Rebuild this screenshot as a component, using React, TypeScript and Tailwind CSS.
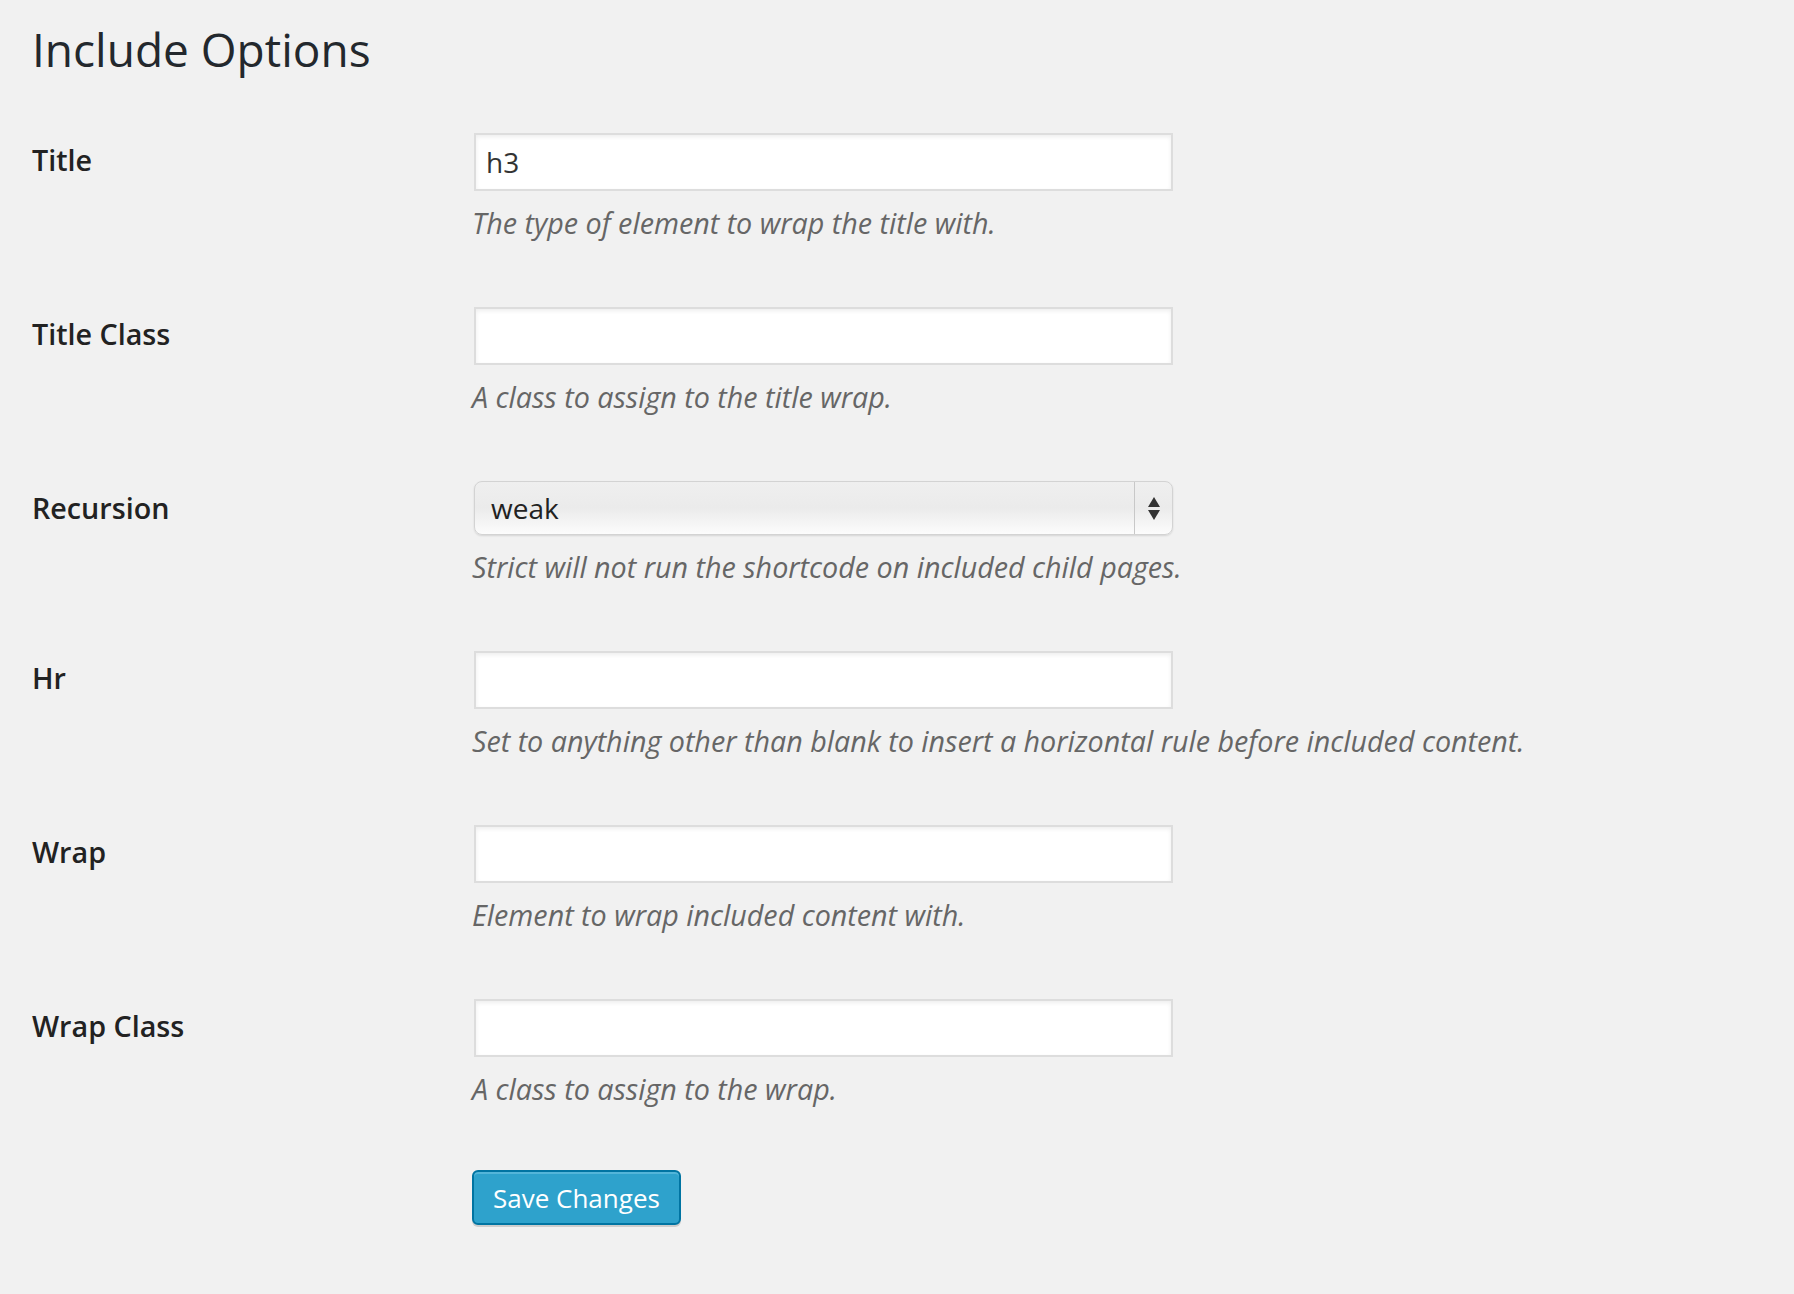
const FIELDS = [
  { label: "Title", value: "h3", help: "The type of element to wrap the title with." },
  { label: "Title Class", value: "", help: "A class to assign to the title wrap." },
  { label: "Recursion", value: "weak", help: "Strict will not run the shortcode on included child pages.", select: true },
  { label: "Hr", value: "", help: "Set to anything other than blank to insert a horizontal rule before included content." },
  { label: "Wrap", value: "", help: "Element to wrap included content with." },
  { label: "Wrap Class", value: "", help: "A class to assign to the wrap." },
];

function SelectBox({ value }: { value: string }) {
  return (
    <div className="ml-[2px] w-[699px] h-[54px] flex rounded-[8px] border border-[#d3d3d3] bg-gradient-to-b from-[#efefef] via-[#ebebeb] to-[#fcfcfc] shadow-[0_1px_2px_rgba(0,0,0,0.12)]">
      <div className="flex-1 flex items-center pl-[16px] text-[28px] text-[#222]">{value}</div>
      <div className="w-[38px] border-l border-[#c8c8c8] flex flex-col items-center justify-center gap-[3px]">
        <svg width="12" height="10" viewBox="0 0 12 10">
          <path d="M6 0 L12 10 L0 10 Z" fill="#333" />
        </svg>
        <svg width="12" height="10" viewBox="0 0 12 10">
          <path d="M0 0 L12 0 L6 10 Z" fill="#333" />
        </svg>
      </div>
    </div>
  );
}

export default function App() {
  return (
    <div className="min-h-screen bg-[#f1f1f1] font-['Open_Sans',sans-serif] px-[32px] pt-[19px] pb-[60px]">
      <h2 className="text-[46px] leading-[60px] text-[#23282d] font-normal">Include Options</h2>
      <div className="mt-[24px]">
        {FIELDS.map((f) => (
          <div key={f.label} className="flex">
            <div className="w-[440px] pt-[39px] text-[28.7px] leading-[36px] font-semibold text-[#222]">
              {f.label}
            </div>
            <div className="flex flex-col pt-[30px] pb-[36px]">
              {f.select ? (
                <SelectBox value={f.value} />
              ) : (
                <div className="ml-[2px] w-[699px] h-[58px] bg-white border-2 border-[#dddddd] shadow-[inset_0_2px_4px_rgba(0,0,0,0.07)] flex items-center pl-[10px] text-[28px] text-[#333]">
                  {f.value}
                </div>
              )}
              <p className="mt-[14px] text-[28.7px] leading-[36px] italic text-[#666]">{f.help}</p>
            </div>
          </div>
        ))}
        <div className="flex pt-[27px]">
          <div className="w-[440px]" />
          <button className="h-[55px] px-[19px] rounded-[6px] bg-[#2ea2cc] border-2 border-[#0074a2] text-white text-[26px] leading-[48px] shadow-[inset_0_2px_0_rgba(120,200,230,0.5),0_2px_0_rgba(0,0,0,0.15)]">
            Save Changes
          </button>
        </div>
      </div>
    </div>
  );
}
